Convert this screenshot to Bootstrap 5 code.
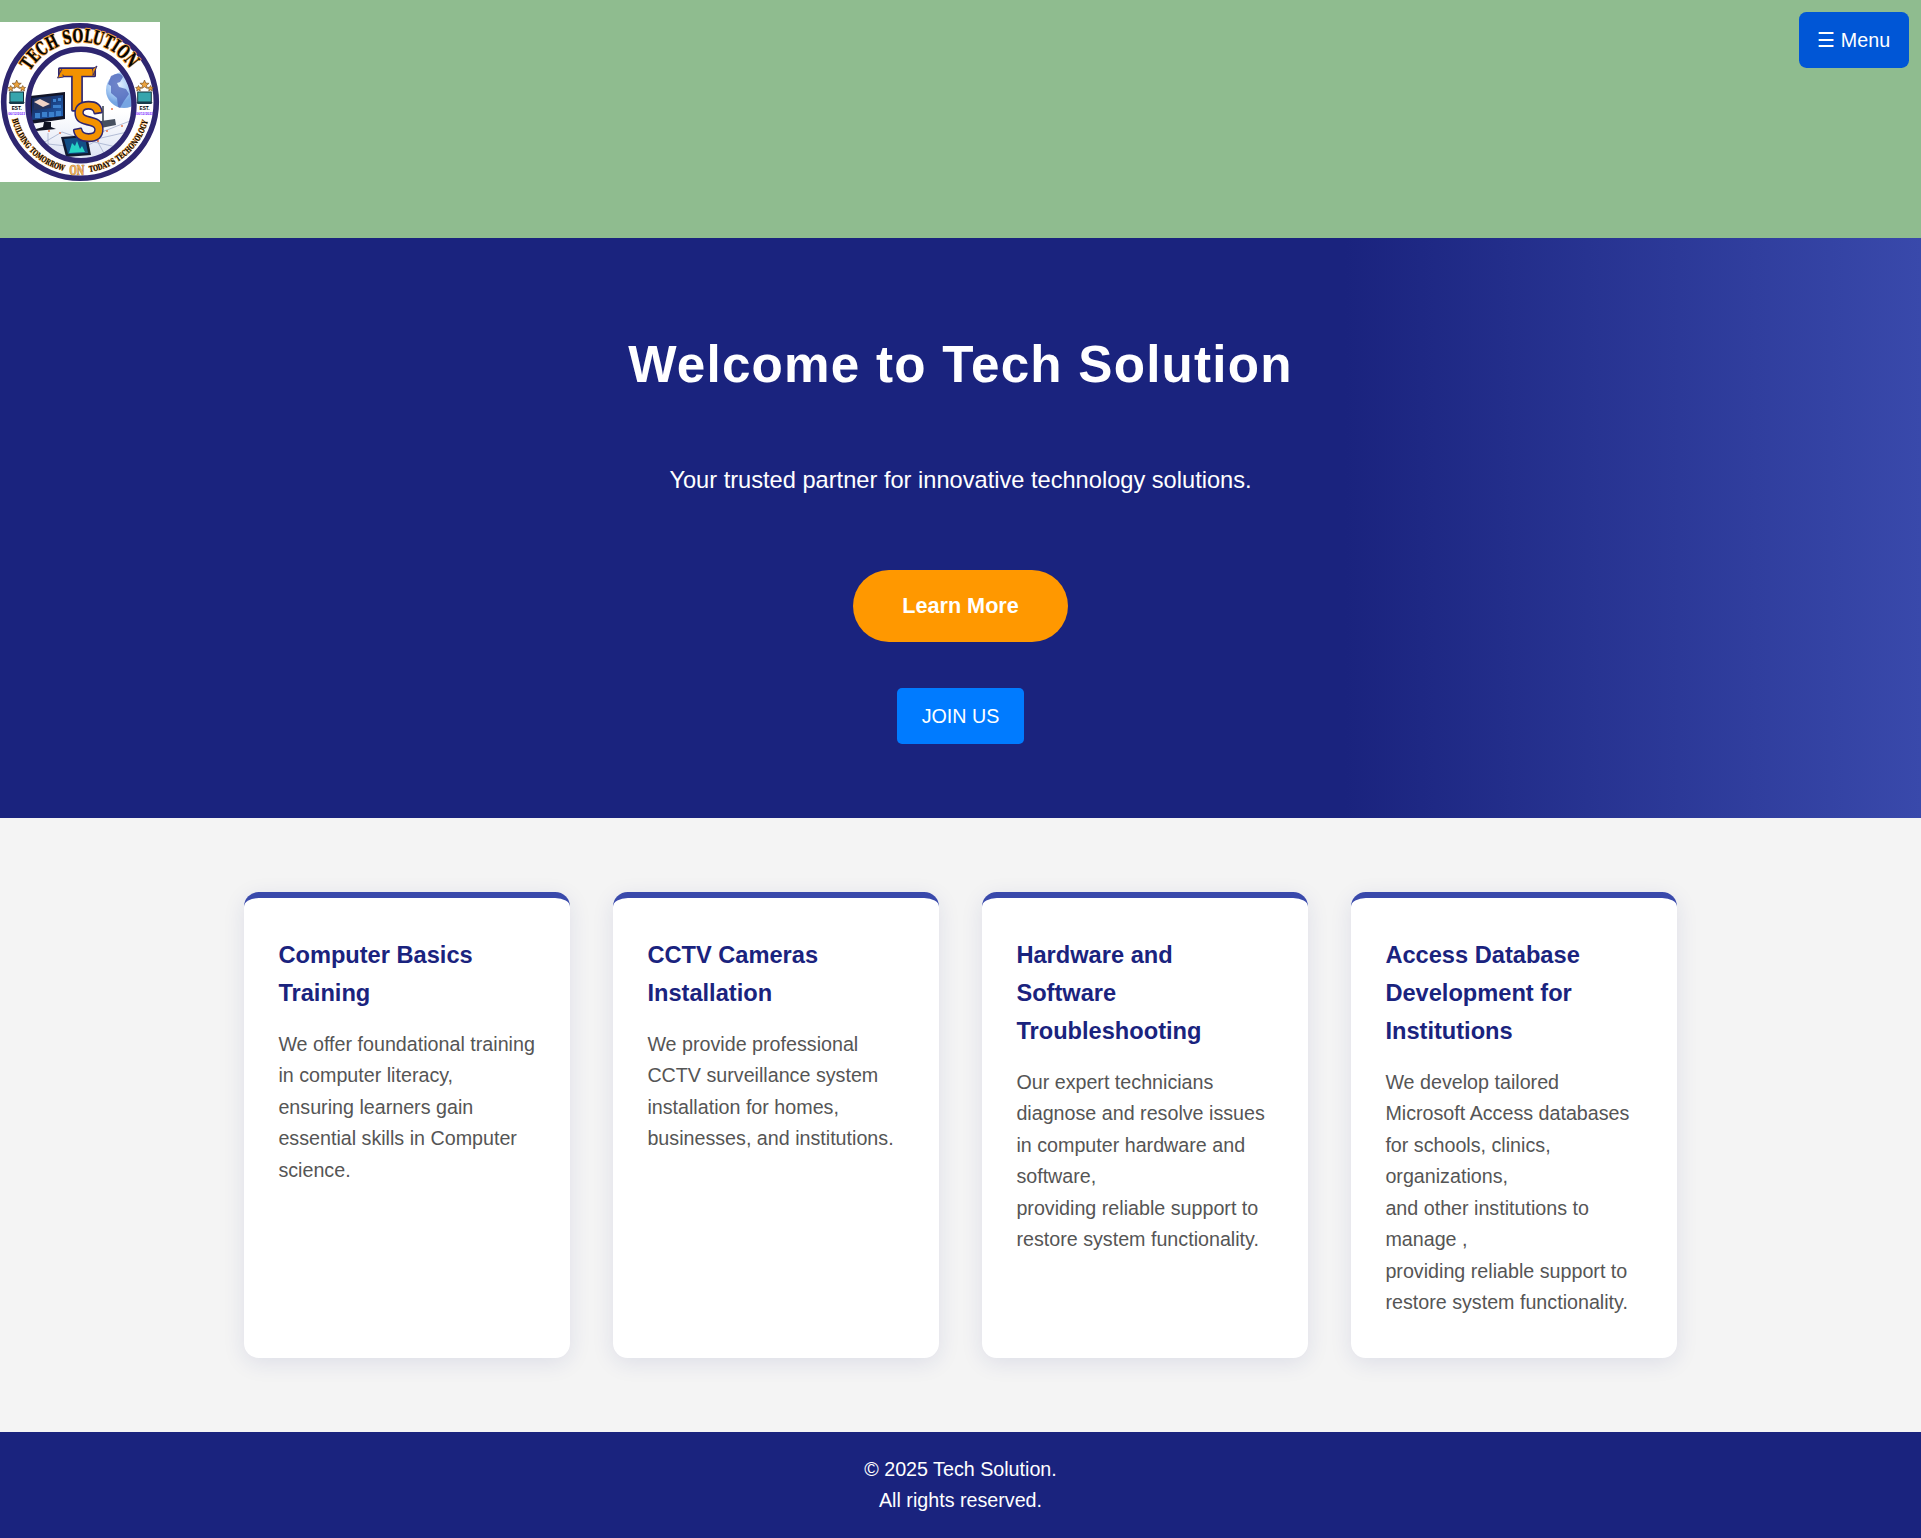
<!DOCTYPE html>
<html lang="en">
<head>
<meta charset="utf-8">
<meta name="viewport" content="width=device-width, initial-scale=1">
<title>Tech Solution</title>
<link href="https://cdn.jsdelivr.net/npm/bootstrap@5.3.0/dist/css/bootstrap.min.css" rel="stylesheet">
<style>
  body { font-family: "Liberation Sans", Arial, sans-serif; font-size: 19.69px; line-height: 1.6; background: #f4f4f4; color: #fff; }
  .site-header { background: #8fbc8f; height: 238px; padding-top: 22px; }
  .site-logo { width: 160px; height: 160px; }
  .menu-btn { position: absolute; top: 12px; right: 12px; background: #0056d6; color: #fff; font-size: 19.69px; line-height: 31.5px; padding: 13px 18.9px 11.5px; border: 0; border-radius: 7.4px; }
  .hero { background: linear-gradient(90deg, #1a237e 70%, #3949ab 100%); height: 580px; padding-top: 86px; }
  .hero h1 { font-size: 51.2px; font-weight: 700; letter-spacing: 1.23px; line-height: 82px; margin-bottom: 54px; }
  .hero p { font-size: 23.63px; line-height: 40px; margin-bottom: 70px; }
  .learn-btn { background: #ff9800; color: #fff; font-size: 21.65px; font-weight: 700; line-height: 36px; padding: 18px 49.2px; border: 0; border-radius: 37px; margin-bottom: 46px; }
  .join-btn { background: #007bff; color: #fff; font-size: 19.69px; line-height: 31.5px; padding: 12.75px 24.6px 11.75px; border: 0; border-radius: 5px; }
  .services { width: 1433px; padding: 74px 0; gap: 43px; }
  .service { flex: 1 1 0; height: 466px; background: #fff; border-top: 6px solid #3949ab; border-radius: 14.8px; padding: 39.4px 34.4px 0; box-shadow: 0 5px 22px rgba(26,35,126,.1); white-space: nowrap; }
  .service h2 { color: #1a237e; font-size: 23.63px; font-weight: 700; line-height: 37.9px; margin-bottom: 15.4px; }
  .service p { color: #555; line-height: 31.5px; margin: 0; }
  .site-footer { background: #1a237e; height: 106px; padding-top: 21.6px; line-height: 31.4px; }
</style>
<script src="https://cdn.jsdelivr.net/npm/bootstrap@5.3.0/dist/js/bootstrap.bundle.min.js"></script>
</head>
<body>
<header class="site-header position-relative">
  <svg class="site-logo d-block" viewBox="0 0 160 160" role="img" aria-label="Tech Solution">
    <defs>
      <path id="arcTop" d="M30 49A59 59 0 0 1 132 50"/>
      <path id="arcLeft" d="M12 97.2A70.5 70.5 0 0 0 66 149.4"/>
      <path id="arcRight" d="M89.5 150A70.5 70.5 0 0 0 148.8 96"/>
      <clipPath id="inside"><ellipse cx="81" cy="83" rx="52" ry="54"/></clipPath>
      <radialGradient id="globe" cx=".35" cy=".35"><stop offset="0" stop-color="#e3f0ff"/><stop offset=".6" stop-color="#a9ccf5"/><stop offset="1" stop-color="#76a5e2"/></radialGradient>
      <linearGradient id="desk" x2="0" y2="1"><stop offset="0" stop-color="#fff"/><stop offset="1" stop-color="#d9e0f2"/></linearGradient>
      <linearGradient id="scr" x2="1" y2="1"><stop offset="0" stop-color="#101a48"/><stop offset="1" stop-color="#2468bd"/></linearGradient>
      <g id="est">
        <path d="M0 -11l1.3 3.1 3.3.2-2.6 2.1.9 3.2-2.9-1.8-2.9 1.8.9-3.2-2.6-2.1 3.3-.2zM-6 -5.5l.9 1.8 2 .2-1.5 1.4.4 2-1.8-1-1.8 1 .4-2-1.5-1.4 2-.2zM6 -5.5l.9 1.8 2 .2-1.5 1.4.4 2-1.8-1-1.8 1 .4-2-1.500-1.4 2-.2z" fill="#eba23d" stroke="#6d4518" stroke-width=".6"/>
        <rect x="-6.800" y="1" width="13.600" height="10" fill="#36a5ad" stroke="#15343e" stroke-width="1"/>
        <path d="M-8 11H8L7 13H-7z" fill="#17394a"/>
        <text y="19.400" text-anchor="middle" font-family="Liberation Sans, sans-serif" font-weight="700" font-size="4.800" fill="#000">EST.</text>
        <text y="23.600" text-anchor="middle" font-family="Liberation Sans, sans-serif" font-weight="700" font-size="3.500" fill="#7b2cff" textLength="17">06/12/2023</text>
      </g>
    </defs>
    <rect width="160" height="160" fill="#fff"/>
    <circle cx="80" cy="80" r="76.3" fill="#fff" stroke="#2e2670" stroke-width="5.6"/>
    <g clip-path="url(#inside)">
      <rect x="25" y="90" width="112" height="52" fill="url(#desk)"/>
      <path d="M31 128L62 110 88 119 136 108M37 118L65 137M60 139L94 120 130 128M106 135L94 113 130 99M48 111V122L76 125" fill="none" stroke="#a3afcc" stroke-width=".8"/>
      <circle cx="124" cy="68" r="18" fill="url(#globe)"/>
      <path d="M111 54q9-5 12 1l-3 5-3 1 2 4 7 2 3 5-5 7-4 7-2-1-1-9-6-5 0-7-3-2z" fill="#5269bb" opacity=".8"/>
      <path d="M128 55l8 5v14l-5-3-2-7z" fill="#7891d5"/>
      <path d="M30 74L65 70V97L30 102z" fill="#111427"/>
      <path d="M32 76L63 73V94L32 98z" fill="url(#scr)"/>
      <path d="M34 77L51 75V86L34 88z" fill="#27355f"/>
      <path d="M34 80l6-3 10 5-7 3z" fill="#f0d3c6"/>
      <path d="M35 91h5v5h-5zM42 90h5v5h-5zM49 90h5v5h-5zM56 89h5v5h-5zM53 77h3v3h-3zM58 76h3v3h-3zM53 83h8v3h-8z" fill="#3b80cc"/>
      <path d="M44 100h7v5l5 2-20 2v-2l7-2z" fill="#101322"/>
      <path d="M103 84V100" stroke="#222b3b" stroke-width="1.4"/>
      <path d="M101 99L115 97 116 103 101 106z" fill="#465060"/>
      <path d="M61 115L87 113 91 133 66 135z" fill="#121930"/>
      <path d="M64 117L85 115 88 131 68 132z" fill="#124e86"/>
      <path d="M69 131l3-10 3 3 2-5 3 8 2-3 3 6z" fill="#26d2c4"/>
      <g fill="#e8754b"><circle cx="49" cy="109" r="1"/><circle cx="60" cy="111" r="1"/><circle cx="107" cy="109" r="1"/><circle cx="122" cy="104" r="1"/><circle cx="98" cy="119" r="1"/><circle cx="112" cy="87" r="1"/><circle cx="124" cy="113" r="1"/></g>
    </g>
    <ellipse cx="81" cy="83" rx="53" ry="55.7" fill="none" stroke="#2e2670" stroke-width="5.4"/>
    <g font-family="DejaVu Serif, serif" font-weight="700" fill="#050505" stroke="#f2a13b" paint-order="stroke" stroke-linejoin="round">
      <text font-size="18.500" stroke-width="1.8"><textPath href="#arcTop" textLength="119" lengthAdjust="spacingAndGlyphs">TECH SOLUTION</textPath></text>
      <text font-size="8" stroke-width=".8"><textPath href="#arcLeft" textLength="77" lengthAdjust="spacingAndGlyphs">BUILDING TOMORROW</textPath></text>
      <text font-size="8" stroke-width=".8"><textPath href="#arcRight" textLength="82" lengthAdjust="spacingAndGlyphs">TODAY'S TECHONOLOGY</textPath></text>
      <text x="69.500" y="152.500" font-size="12.500" textLength="15" lengthAdjust="spacingAndGlyphs" fill="#efaa4d" stroke="#7d511d" stroke-width=".7">ON</text>
    </g>
    <g font-family="Liberation Sans, sans-serif" font-weight="700" fill="#f39200" stroke="#2e2670" stroke-width="3.400" paint-order="stroke" stroke-linejoin="round">
      <text x="59" y="88" font-size="60" textLength="36" lengthAdjust="spacingAndGlyphs">T</text>
      <text x="73" y="118" font-size="54" textLength="31" lengthAdjust="spacingAndGlyphs">S</text>
    </g>
    <path d="M61.500 47.500L57.500 56l6-1zM92.500 47l4.500-3-4 9.500z" fill="#f39200" stroke="#2e2670" stroke-width=".9"/>
    <path d="M61.500 48.500h31v4h-31z" fill="#f39200"/>
    <use href="#est" x="16.700" y="69"/>
    <use href="#est" x="144.500" y="69"/>
  </svg>
  <button class="menu-btn" type="button">☰ Menu</button>
</header>
<main>
  <section class="hero d-flex flex-column align-items-center text-center">
    <h1>Welcome to Tech Solution</h1>
    <p>Your trusted partner for innovative technology solutions.</p>
    <button class="learn-btn" type="button">Learn More</button>
    <button class="join-btn" type="button">JOIN US</button>
  </section>
  <section class="services d-flex mx-auto">
    <article class="service"><h2>Computer Basics<br>Training</h2><p>We offer foundational training<br>in computer literacy,<br>ensuring learners gain<br>essential skills in Computer<br>science.</p></article>
    <article class="service"><h2>CCTV Cameras<br>Installation</h2><p>We provide professional<br>CCTV surveillance system<br>installation for homes,<br>businesses, and institutions.</p></article>
    <article class="service"><h2>Hardware and<br>Software<br>Troubleshooting</h2><p>Our expert technicians<br>diagnose and resolve issues<br>in computer hardware and<br>software,<br>providing reliable support to<br>restore system functionality.</p></article>
    <article class="service"><h2>Access Database<br>Development for<br>Institutions</h2><p>We develop tailored<br>Microsoft Access databases<br>for schools, clinics,<br>organizations,<br>and other institutions to<br>manage ,<br>providing reliable support to<br>restore system functionality.</p></article>
  </section>
</main>
<footer class="site-footer text-center">© 2025 Tech Solution.<br>All rights reserved.</footer>
</body>
</html>
